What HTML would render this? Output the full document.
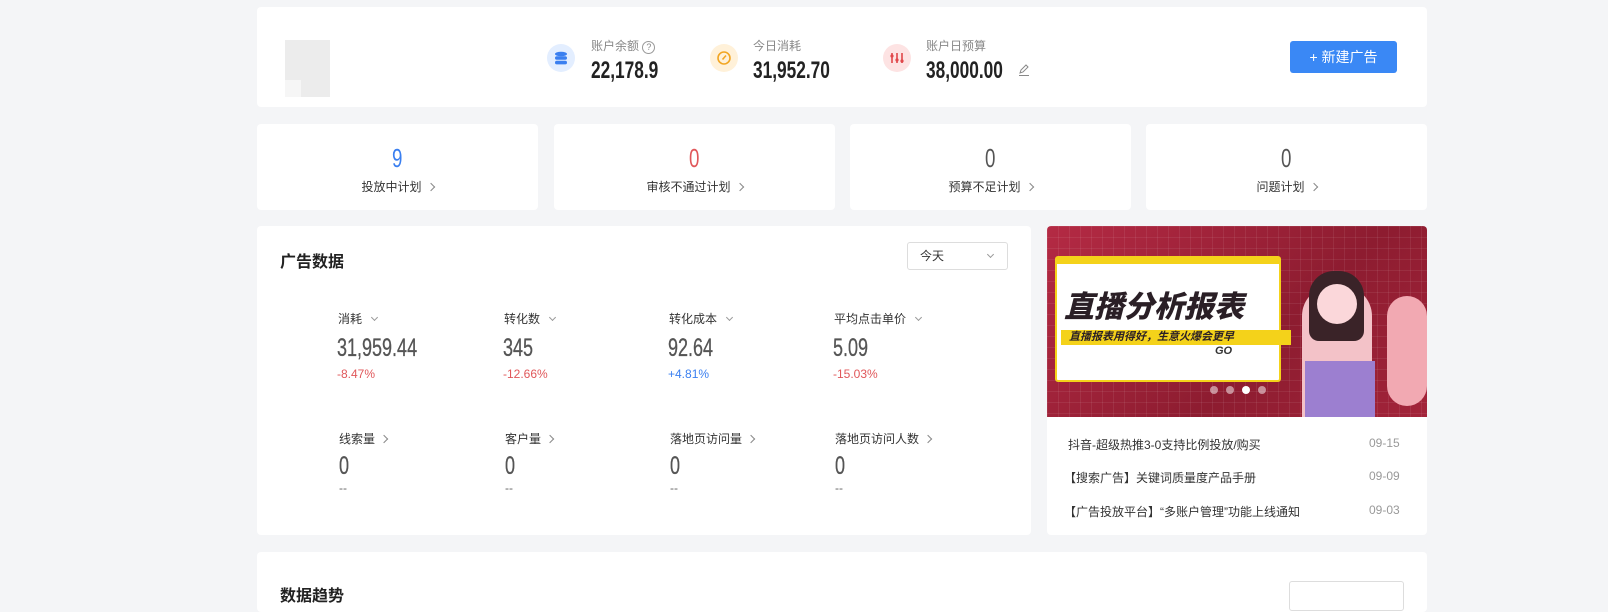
<!DOCTYPE html>
<html><head><meta charset="utf-8"><style>
*{margin:0;padding:0;box-sizing:border-box}
body{width:1608px;height:593px;overflow:hidden;background:#f4f5f7;font-family:"Liberation Sans","Noto Sans CJK SC",sans-serif;color:#333;position:relative}
.card{position:absolute;background:#fff;border-radius:4px}
.abs{position:absolute;white-space:nowrap}
.n{display:inline-block;transform:scaleX(.72);transform-origin:left center}
.lbl{font-size:12px;color:#888}
.big{font-size:24px;font-weight:bold;color:#222;line-height:24px}
.ic{position:absolute;width:28px;height:28px;border-radius:50%}
.ctr{text-align:center;width:100%}
.chev{display:inline-block;width:6px;height:6px;border-right:1px solid #888;border-bottom:1px solid #888;transform:rotate(-45deg);margin-left:6px;vertical-align:1px}
.dn{display:inline-block;width:5px;height:5px;border-right:1px solid #999;border-bottom:1px solid #999;transform:rotate(45deg);margin-left:10px;vertical-align:3px}
.mt{font-size:12px;color:#333}
.mv{font-size:25px;color:#555;line-height:24px;-webkit-text-stroke:0.3px #555}
.pc{font-size:12px}
</style></head><body>

<div class="card" style="left:257px;top:7px;width:1170px;height:100px">
  <div class="abs" style="left:28px;top:33px;width:45px;height:57px;background:#ececec"></div>
  <div class="abs" style="left:28px;top:73px;width:16px;height:17px;background:#f6f6f6"></div>
  <div class="ic" style="left:290px;top:37px;background:#e3eeff">
    <svg width="28" height="28" viewBox="0 0 28 28"><g fill="#3a7ff0"><ellipse cx="14" cy="10" rx="6" ry="2.3"/><rect x="8" y="12.2" width="12" height="3.6" rx="1.8"/><rect x="8" y="16.8" width="12" height="3.6" rx="1.8"/></g></svg>
  </div>
  <div class="abs lbl" style="left:334px;top:30px">账户余额 <span style="display:inline-block;width:13px;height:13px;border:1px solid #999;border-radius:50%;font-size:9px;text-align:center;line-height:11px;color:#888">?</span></div>
  <div class="abs big" style="left:334px;top:52px"><span class="n">22,178.9</span></div>

  <div class="ic" style="left:453px;top:37px;background:#fff1d9">
    <svg width="28" height="28" viewBox="0 0 28 28"><circle cx="14" cy="14" r="6" fill="none" stroke="#f2a623" stroke-width="1.6"/><path d="M12.5 15.5 L16 11.5" stroke="#f2a623" stroke-width="1.6"/></svg>
  </div>
  <div class="abs lbl" style="left:496px;top:30px">今日消耗</div>
  <div class="abs big" style="left:496px;top:52px"><span class="n">31,952.70</span></div>

  <div class="ic" style="left:626px;top:37px;background:#fde3e3">
    <svg width="28" height="28" viewBox="0 0 28 28"><g stroke="#e0474a" stroke-width="1.6"><path d="M9 9v10M14 9v10M19 9v10"/></g><g fill="#e0474a"><circle cx="9" cy="12" r="1.6"/><circle cx="14" cy="16" r="1.6"/><circle cx="19" cy="17" r="1.6"/></g></svg>
  </div>
  <div class="abs lbl" style="left:669px;top:30px">账户日预算</div>
  <div class="abs big" style="left:669px;top:52px"><span class="n">38,000.00</span></div>
  <svg class="abs" style="left:760px;top:56px" width="14" height="14" viewBox="0 0 14 14"><path d="M3 10l1-3 5-5 2 2-5 5zM2 12.5h10" fill="none" stroke="#888" stroke-width="1"/></svg>

  <div class="abs" style="left:1033px;top:34px;width:107px;height:32px;background:#3a88f5;border-radius:3px;color:#fff;font-size:14px;text-align:center;line-height:32px">+ 新建广告</div>
</div>

<div class="card" style="left:257px;top:124px;width:281px;height:86px">
  <div class="abs ctr" style="top:19px;font-size:26px;color:#3a7ff0"><span class="n" style="transform-origin:center">9</span></div>
  <div class="abs ctr" style="top:54px;font-size:12px">投放中计划<span class="chev"></span></div>
</div>
<div class="card" style="left:554px;top:124px;width:281px;height:86px">
  <div class="abs ctr" style="top:19px;font-size:26px;color:#e0575a"><span class="n" style="transform-origin:center">0</span></div>
  <div class="abs ctr" style="top:54px;font-size:12px">审核不通过计划<span class="chev"></span></div>
</div>
<div class="card" style="left:850px;top:124px;width:281px;height:86px">
  <div class="abs ctr" style="top:19px;font-size:26px;color:#555"><span class="n" style="transform-origin:center">0</span></div>
  <div class="abs ctr" style="top:54px;font-size:12px">预算不足计划<span class="chev"></span></div>
</div>
<div class="card" style="left:1146px;top:124px;width:281px;height:86px">
  <div class="abs ctr" style="top:19px;font-size:26px;color:#555"><span class="n" style="transform-origin:center">0</span></div>
  <div class="abs ctr" style="top:54px;font-size:12px">问题计划<span class="chev"></span></div>
</div>

<div class="card" style="left:257px;top:226px;width:774px;height:309px">
  <div class="abs" style="left:23px;top:22px;font-size:16px;font-weight:bold;color:#222">广告数据</div>
  <div class="abs" style="left:650px;top:16px;width:101px;height:28px;border:1px solid #ddd;border-radius:3px;font-size:12px;line-height:26px;padding-left:12px">今天<span class="dn" style="position:absolute;right:14px;top:9px"></span></div>

  <div class="abs mt" style="left:81px;top:84px">消耗<span class="dn"></span></div>
  <div class="abs mv" style="left:80px;top:110px"><span class="n">31,959.44</span></div>
  <div class="abs pc" style="left:80px;top:141px;color:#e0575a">-8.47%</div>
  <div class="abs mt" style="left:247px;top:84px">转化数<span class="dn"></span></div>
  <div class="abs mv" style="left:246px;top:110px"><span class="n">345</span></div>
  <div class="abs pc" style="left:246px;top:141px;color:#e0575a">-12.66%</div>
  <div class="abs mt" style="left:412px;top:84px">转化成本<span class="dn"></span></div>
  <div class="abs mv" style="left:411px;top:110px"><span class="n">92.64</span></div>
  <div class="abs pc" style="left:411px;top:141px;color:#3a7ff0">+4.81%</div>
  <div class="abs mt" style="left:577px;top:84px">平均点击单价<span class="dn"></span></div>
  <div class="abs mv" style="left:576px;top:110px"><span class="n">5.09</span></div>
  <div class="abs pc" style="left:576px;top:141px;color:#e0575a">-15.03%</div>

  <div class="abs mt" style="left:82px;top:204px">线索量<span class="chev"></span></div>
  <div class="abs mv" style="left:82px;top:228px"><span class="n">0</span></div>
  <div class="abs pc" style="left:82px;top:255px;color:#666">--</div>
  <div class="abs mt" style="left:248px;top:204px">客户量<span class="chev"></span></div>
  <div class="abs mv" style="left:248px;top:228px"><span class="n">0</span></div>
  <div class="abs pc" style="left:248px;top:255px;color:#666">--</div>
  <div class="abs mt" style="left:413px;top:204px">落地页访问量<span class="chev"></span></div>
  <div class="abs mv" style="left:413px;top:228px"><span class="n">0</span></div>
  <div class="abs pc" style="left:413px;top:255px;color:#666">--</div>
  <div class="abs mt" style="left:578px;top:204px">落地页访问人数<span class="chev"></span></div>
  <div class="abs mv" style="left:578px;top:228px"><span class="n">0</span></div>
  <div class="abs pc" style="left:578px;top:255px;color:#666">--</div>
</div>

<div class="card" style="left:1047px;top:226px;width:380px;height:309px;overflow:hidden">
  <div class="abs" style="left:0;top:0;width:380px;height:191px;background:linear-gradient(135deg,#b42a44,#8d1c30 60%,#a3243a);overflow:hidden">
    <div class="abs" style="left:0;top:0;width:380px;height:191px;background-image:linear-gradient(rgba(255,255,255,.07) 1px,transparent 1px),linear-gradient(90deg,rgba(255,255,255,.07) 1px,transparent 1px);background-size:11px 11px"></div>
    <div class="abs" style="left:8px;top:30px;width:226px;height:126px;background:#fff;border:2px solid #f4d21a;border-top-width:8px;border-radius:3px"></div>
    <div class="abs" style="left:17px;top:56px;font-size:30px;font-weight:900;font-style:italic;color:#2a1f26">直播分析报表</div>
    <div class="abs" style="left:14px;top:104px;width:230px;height:15px;background:#f4d21a;font-size:11px;font-weight:bold;font-style:italic;color:#2a1f26;line-height:15px;padding-left:8px">直播报表用得好，生意火爆会更早</div>
    <div class="abs" style="left:168px;top:119px;font-size:11px;font-weight:bold;font-style:italic;color:#333">GO</div>
    <div class="abs" style="left:255px;top:60px;width:70px;height:131px;background:#f3c2c8;border-radius:30px 30px 0 0"></div>
    <div class="abs" style="left:262px;top:45px;width:55px;height:70px;background:#3a2328;border-radius:25px 25px 10px 10px"></div>
    <div class="abs" style="left:270px;top:58px;width:40px;height:40px;background:#fbd7da;border-radius:50%"></div>
    <div class="abs" style="left:258px;top:135px;width:70px;height:56px;background:#9c7fd0"></div>
    <div class="abs" style="left:340px;top:70px;width:40px;height:110px;background:#f2a9b2;border-radius:20px"></div>
    <div class="abs" style="left:163px;top:160px;width:8px;height:8px;border-radius:50%;background:rgba(255,255,255,.5)"></div>
    <div class="abs" style="left:179px;top:160px;width:8px;height:8px;border-radius:50%;background:rgba(255,255,255,.5)"></div>
    <div class="abs" style="left:195px;top:160px;width:8px;height:8px;border-radius:50%;background:#fff"></div>
    <div class="abs" style="left:211px;top:160px;width:8px;height:8px;border-radius:50%;background:rgba(255,255,255,.5)"></div>
  </div>
  <div class="abs" style="left:21px;top:210px;font-size:12px;color:#333">抖音-超级热推3-0支持比例投放/购买</div>
  <div class="abs" style="left:322px;top:210px;font-size:12px;color:#999">09-15</div>
  <div class="abs" style="left:17px;top:243px;font-size:12px;color:#333">【搜索广告】关键词质量度产品手册</div>
  <div class="abs" style="left:322px;top:243px;font-size:12px;color:#999">09-09</div>
  <div class="abs" style="left:17px;top:277px;font-size:12px;color:#333">【广告投放平台】“多账户管理”功能上线通知</div>
  <div class="abs" style="left:322px;top:277px;font-size:12px;color:#999">09-03</div>
</div>

<div class="card" style="left:257px;top:552px;width:1170px;height:60px">
  <div class="abs" style="left:23px;top:30px;font-size:16px;font-weight:bold;color:#222">数据趋势</div>
  <div class="abs" style="left:1032px;top:29px;width:115px;height:30px;border:1px solid #ddd;border-radius:3px"></div>
</div>
</body></html>
